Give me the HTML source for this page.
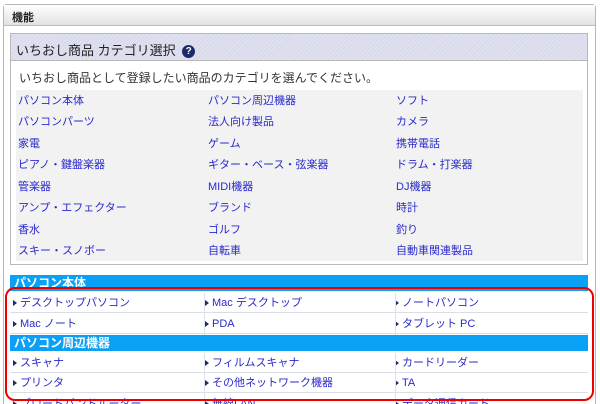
<!DOCTYPE html>
<html><head><meta charset="utf-8"><style>
*{margin:0;padding:0;box-sizing:border-box}
html,body{width:600px;height:404px;overflow:hidden}
body{background:#fff;font-family:"Liberation Sans","Noto Sans CJK JP",sans-serif;font-size:12px;color:#333;position:relative}
.outer{position:absolute;left:3px;top:4px;width:593px;height:400px;border:1px solid #b5b5b5;border-bottom:none;border-radius:4px 4px 0 0;background:#fff}
.hd{height:21px;background:linear-gradient(#fff,#f0f0f0 50%,#e2e2e2);border-bottom:1px solid #bbb;font-weight:bold;font-size:11px;padding:4px 0 0 8px;color:#222}
.panel{position:absolute;left:10px;top:33px;width:578px;height:232px;border:1px solid #b8b8b8;background:#fff}
.ttl{height:27px;border-bottom:1px solid #b8b8b8;background:repeating-linear-gradient(135deg,#dfe1ef 0 2px,#d5d8ea 2px 3px);font-size:13px;padding:6px 0 0 5px;color:#222}
.q{display:inline-block;width:13px;height:13px;border-radius:50%;background:#1b2a6b;color:#fff;font-size:10px;text-align:center;line-height:13px;font-weight:bold;vertical-align:1px;margin-left:3px}
.desc{position:absolute;left:8px;top:35px;font-size:12px;color:#333}
.list{position:absolute;left:5px;top:56px;width:567px;height:171px;background:#f2f2f2}
.list a{position:absolute;color:#2a2acc;font-size:11px;text-decoration:none;white-space:nowrap;line-height:14px}
.bar{position:absolute;left:10px;width:578px;height:16px;background:#0aa0f5;color:#fff;font-weight:bold;font-size:12px;padding-left:4px;line-height:16px}
.row{position:absolute;left:10px;width:578px;height:20px;border-bottom:1px solid #d8dde6}
.row span{position:absolute;top:3px;color:#2a2acc;font-size:11px;white-space:nowrap;line-height:14px;height:14px;display:block}
.row span:before{content:"";display:inline-block;border-left:4px solid #1b2a6b;border-top:3px solid transparent;border-bottom:3px solid transparent;margin-right:3px;vertical-align:middle}
.vl{position:absolute;width:1px;background:#dde2ea}
.red{position:absolute;left:5px;top:287px;width:589px;height:114px;border:2px solid #e00;border-radius:10px}
</style></head><body>
<div class="outer"><div class="hd">機能</div></div>
<div class="panel">
<div class="ttl">いちおし商品 カテゴリ選択 <span class="q">?</span></div>
<div class="desc">いちおし商品として登録したい商品のカテゴリを選んでください。</div>
<div class="list">
<a style="left:2px;top:4px">パソコン本体</a><a style="left:192px;top:4px">パソコン周辺機器</a><a style="left:380px;top:4px">ソフト</a>
<a style="left:2px;top:25px">パソコンパーツ</a><a style="left:192px;top:25px">法人向け製品</a><a style="left:380px;top:25px">カメラ</a>
<a style="left:2px;top:47px">家電</a><a style="left:192px;top:47px">ゲーム</a><a style="left:380px;top:47px">携帯電話</a>
<a style="left:2px;top:68px">ピアノ・鍵盤楽器</a><a style="left:192px;top:68px">ギター・ベース・弦楽器</a><a style="left:380px;top:68px">ドラム・打楽器</a>
<a style="left:2px;top:90px">管楽器</a><a style="left:192px;top:90px">MIDI機器</a><a style="left:380px;top:90px">DJ機器</a>
<a style="left:2px;top:111px">アンプ・エフェクター</a><a style="left:192px;top:111px">ブランド</a><a style="left:380px;top:111px">時計</a>
<a style="left:2px;top:133px">香水</a><a style="left:192px;top:133px">ゴルフ</a><a style="left:380px;top:133px">釣り</a>
<a style="left:2px;top:154px">スキー・スノボー</a><a style="left:192px;top:154px">自転車</a><a style="left:380px;top:154px">自動車関連製品</a>
</div>
</div>
<div class="bar" style="top:275px">パソコン本体</div>
<div class="row" style="top:293px"><span style="left:3px">デスクトップパソコン</span><span style="left:195px">Mac デスクトップ</span><span style="left:385px">ノートパソコン</span></div>
<div class="row" style="top:314px"><span style="left:3px">Mac ノート</span><span style="left:195px">PDA</span><span style="left:385px">タブレット PC</span></div>
<div class="bar" style="top:335px">パソコン周辺機器</div>
<div class="row" style="top:353px"><span style="left:3px">スキャナ</span><span style="left:195px">フィルムスキャナ</span><span style="left:385px">カードリーダー</span></div>
<div class="row" style="top:373px"><span style="left:3px">プリンタ</span><span style="left:195px">その他ネットワーク機器</span><span style="left:385px">TA</span></div>
<div class="row" style="top:394px;height:10px;overflow:hidden;border:none"><span style="left:3px">ブロードバンドルーター</span><span style="left:195px">無線LAN</span><span style="left:385px">データ通信カード</span></div>
<div class="vl" style="left:204px;top:293px;height:42px"></div><div class="vl" style="left:395px;top:293px;height:42px"></div>
<div class="vl" style="left:204px;top:353px;height:51px"></div><div class="vl" style="left:395px;top:353px;height:51px"></div>
<div class="red"></div>
</body></html>
